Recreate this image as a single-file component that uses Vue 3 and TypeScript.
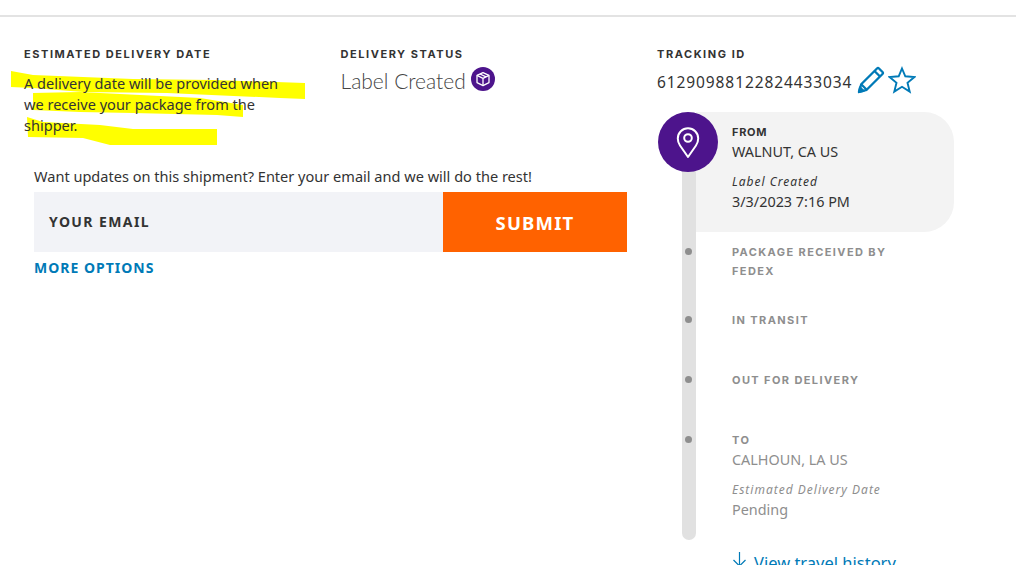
<script setup lang="ts">
const steps = [
  { label: 'PACKAGE RECEIVED BY FEDEX', cls: 'received' },
  { label: 'IN TRANSIT', cls: 'transit' },
  { label: 'OUT FOR DELIVERY', cls: 'out' },
]
</script>

<template>
  <div class="page">
    <div class="top-rule"></div>

    <svg class="marker" width="320" height="150" viewBox="0 0 320 150">
      <path d="M11 71 L33 75 L133 79 L213 80 L305 83 L305 99 L280 98 L167 93 L83 92 L33 88 L11 87 Z" fill="#ffff00" />
      <path d="M33 93 L80 92 L200 98 L243 105 L243 117 L217 115 L133 113 L80 112 L33 110 Z" fill="#ffff00" />
      <path d="M27 117 L43 122 L100 125 L133 129 L217 129 L217 145 L110 145 L83 138 L28 137 Z" fill="#ffff00" />
    </svg>

    <div class="columns">
      <section class="col col-left">
        <h3 class="label">ESTIMATED DELIVERY DATE</h3>
        <p class="date-copy">A delivery date will be provided when we receive your package from the shipper.</p>

        <div class="updates">
          <p class="updates-copy">Want updates on this shipment? Enter your email and we will do the rest!</p>
          <form class="email-form" @submit.prevent>
            <div class="email-input">YOUR EMAIL</div>
            <button class="submit" type="submit">SUBMIT</button>
          </form>
          <a class="more" href="#">MORE OPTIONS</a>
        </div>
      </section>

      <section class="col col-status">
        <h3 class="label">DELIVERY STATUS</h3>
        <div class="status">
          <span>Label Created</span>
          <span class="status-icon">
            <svg width="16" height="16" viewBox="0 0 16 16" fill="none" stroke="#fff" stroke-width="1.3" stroke-linejoin="round">
              <path d="M8 1.6 14 4.4V11.6L8 14.6 2 11.6V4.4Z" />
              <path d="M2 4.4 8 7.4 14 4.4M8 7.4V14.6M5 3 11 5.9" />
            </svg>
          </span>
        </div>
      </section>

      <section class="col col-track">
        <h3 class="label">TRACKING ID</h3>
        <div class="tracking">
          <span>61290988122824433034</span>
          <svg class="pencil" width="28" height="28" viewBox="0 0 28 28" fill="none" stroke="#007ab7" stroke-width="2.3" stroke-linejoin="round">
            <path d="M2 26 4.2 18.3 20 2.5Q21 1.5 22 2.5L25.5 6Q26.5 7 25.5 8L9.7 23.8Z" />
            <path d="M4.2 18.3 9.7 23.8M17.5 5 23 10.5" />
            <path d="M2 26 3 21.5 6.5 25Z" fill="#007ab7" />
          </svg>
          <svg class="star" width="28" height="28" viewBox="0 0 28 28" fill="none" stroke="#007ab7" stroke-width="1.9" stroke-linejoin="miter">
            <path d="M14 2.5 17.3 10.3 26.5 11 19.5 16.8 21.7 25.6 14 20.8 6.3 25.6 8.5 16.8 1.5 11 10.7 10.3Z" />
          </svg>
        </div>

        <div class="timeline">
          <div class="rail"></div>
          <div class="origin">
            <div class="pin-circle">
              <svg width="26" height="34" viewBox="0 0 26 34" fill="none" stroke="#fff" stroke-width="2">
                <path d="M13 32 5 20.5C3.6 18.5 2.8 16 2.8 13.5A10.2 10.2 0 0 1 23.2 13.5C23.2 16 22.4 18.5 21 20.5Z" stroke-linejoin="round" />
                <circle cx="13" cy="13" r="3.8" />
              </svg>
            </div>
            <div class="stop-title">FROM</div>
            <div class="stop-place">WALNUT, CA US</div>
            <div class="stop-note">Label Created</div>
            <div class="stop-place">3/3/2023 7:16 PM</div>
          </div>

          <div v-for="step in steps" :key="step.label" class="step" :class="step.cls">
            <span class="dot"></span>
            <div class="stop-title">{{ step.label }}</div>
          </div>

          <div class="step dest">
            <span class="dot"></span>
            <div class="stop-title">TO</div>
            <div class="stop-place">CALHOUN, LA US</div>
            <div class="stop-note">Estimated Delivery Date</div>
            <div class="stop-place">Pending</div>
          </div>
        </div>

        <a class="history" href="#">
          <svg width="16" height="20" viewBox="0 0 16 20" fill="none" stroke="#007ab7" stroke-width="1.2">
            <path d="M7.5 0V14M1.5 8 7.5 14 13.5 8" />
          </svg>
          <span>View travel history</span>
        </a>
      </section>
    </div>
  </div>
</template>

<style scoped>
.page {
  position: relative;
  height: 565px;
  overflow: hidden;
  background: #fff;
  font-family: "Noto Sans", "Open Sans", sans-serif;
  color: #333;
}

.top-rule {
  height: 2px;
  margin-top: 15px;
  background: #e3e3e3;
}

.marker {
  position: absolute;
  left: 0;
  top: 0;
  pointer-events: none;
}

.columns {
  position: relative;
  display: grid;
  grid-template-columns: 316.5px 316.5px 1fr;
  padding: 29px 0 0 24px;
}

.label {
  margin: 0;
  font-family: Inter, sans-serif;
  font-size: 11px;
  line-height: 16px;
  font-weight: 700;
  letter-spacing: 1.55px;
  color: #333;
}

.date-copy {
  width: 270px;
  margin: 11px 0 0;
  font-size: 14.55px;
  line-height: 21px;
}

.updates {
  width: 593px;
  margin: 30px 0 0 10px;
}

.updates-copy {
  margin: 0;
  font-size: 14.55px;
  line-height: 20px;
}

.email-form {
  display: flex;
  height: 60px;
  margin-top: 6px;
}

.email-input {
  flex: 1;
  display: flex;
  align-items: center;
  padding-left: 15px;
  padding-bottom: 1px;
  background: #f2f3f7;
  font-size: 14px;
  font-weight: 700;
  letter-spacing: 1.4px;
}

.submit {
  width: 184px;
  border: none;
  padding: 0;
  background: #ff6200;
  color: #fff;
  font-family: inherit;
  font-size: 18.5px;
  font-weight: 700;
  letter-spacing: 1.2px;
}

.more {
  display: block;
  margin-top: 7px;
  color: #007ab7;
  font-size: 14px;
  line-height: 18px;
  font-weight: 700;
  letter-spacing: 1px;
  text-decoration: none;
}

.status {
  display: flex;
  align-items: center;
  gap: 5px;
  margin-top: 6px;
  font-family: Lato, sans-serif;
  font-weight: 300;
  font-size: 21px;
  line-height: 26px;
  color: #444;
}

.status-icon {
  display: flex;
  align-items: center;
  justify-content: center;
  width: 24px;
  height: 24px;
  margin-top: -4px;
  border-radius: 50%;
  background: #4d148c;
}

.tracking {
  display: flex;
  align-items: center;
  margin-top: 5px;
  height: 30px;
  font-size: 15.5px;
  letter-spacing: 0.9px;
}

.pencil {
  margin-left: 5px;
  margin-top: -4px;
}

.star {
  margin-left: 3px;
  margin-top: -4px;
}

.timeline {
  position: relative;
  width: 297px;
  margin-top: 15px;
}

.rail {
  position: absolute;
  left: 25px;
  top: 40px;
  width: 14px;
  height: 388px;
  border-radius: 0 0 7px 7px;
  background: #e1e1e1;
}

.origin {
  position: relative;
  box-sizing: border-box;
  margin-left: 39px;
  height: 120px;
  padding: 11px 0 0 36px;
  border-radius: 0 30px 30px 0;
  background: #f3f3f3;
}

.pin-circle {
  position: absolute;
  left: -38px;
  top: 0;
  display: flex;
  align-items: center;
  justify-content: center;
  width: 60px;
  height: 60px;
  border-radius: 50%;
  background: #4d148c;
}

.stop-title {
  font-family: Inter, sans-serif;
  font-size: 11px;
  line-height: 19px;
  font-weight: 700;
  letter-spacing: 1.4px;
}

.origin .stop-title {
  letter-spacing: 0.7px;
}

.stop-place {
  font-size: 14.4px;
  line-height: 20px;
}

.stop-note {
  margin-top: 10px;
  font-size: 12px;
  line-height: 20px;
  font-style: italic;
  letter-spacing: 1px;
}

.step {
  position: relative;
  box-sizing: border-box;
  padding-left: 75px;
  width: 245px;
  color: #8e8e8e;
}

.step .stop-title {
  color: #8e8e8e;
}

.dot {
  position: absolute;
  left: 28px;
  top: 16px;
  width: 7px;
  height: 7px;
  border-radius: 50%;
  background: #8e8e8e;
}

.received {
  height: 68px;
  padding-top: 11px;
}

.transit,
.out {
  height: 60px;
  padding-top: 11px;
}

.dest {
  padding-top: 11px;
}

.history {
  display: flex;
  align-items: flex-start;
  gap: 6px;
  margin: 32px 0 0 75px;
  color: #007ab7;
  font-size: 16.5px;
  line-height: 22px;
  text-decoration: none;
}
</style>
